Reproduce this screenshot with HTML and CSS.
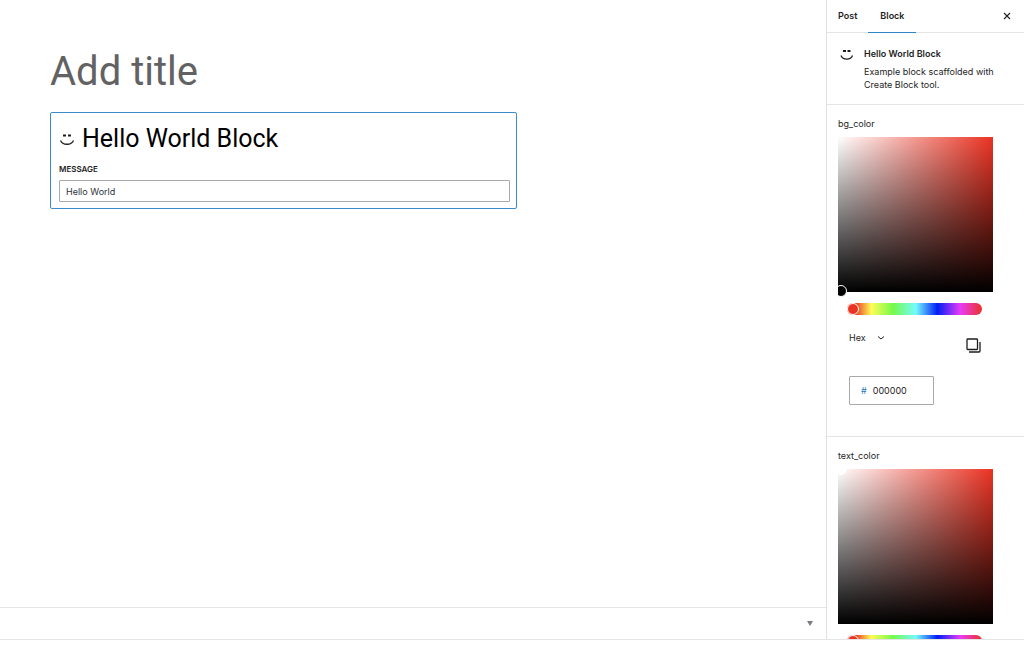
FILE: index.html
```html
<!DOCTYPE html>
<html lang="en">
<head>
<meta charset="utf-8">
<meta name="viewport" content="width=device-width, initial-scale=1">
<title>Edit Post</title>
<link rel="stylesheet" href="styles.css">
</head>
<body>
<div class="app">
  <main class="editor">
    <div class="canvas">
      <h1 class="post-title">Add title</h1>
      <section class="block">
        <h2 class="block-heading">
          <svg class="smiley" viewBox="0 0 16 16" aria-hidden="true"><path d="M4 4.500h3M9 4.500h3" stroke-width="1.800"/><path d="M1.500 9.500c2 5 11 5 13 0" stroke-width="1.300"/></svg>
          Hello World Block
        </h2>
        <label class="field-label" for="message">Message</label>
        <input class="field-input" id="message" type="text" value="Hello World">
      </section>
    </div>
    <div class="metaboxes">
      <button class="metabox-toggle" type="button" aria-label="Toggle panel"><svg viewBox="0 0 6 5" aria-hidden="true"><path d="M0 0h6L3 5z"/></svg></button>
    </div>
  </main>
  <aside class="sidebar">
    <header class="tabs">
      <button class="tab" type="button">Post</button>
      <button class="tab tab-active" type="button">Block</button>
      <button class="close" type="button" aria-label="Close settings"><svg viewBox="0 0 8 8" aria-hidden="true"><path d="M1 1l6 6M7 1L1 7"/></svg></button>
    </header>
    <section class="card">
      <svg class="smiley" viewBox="0 0 16 16" aria-hidden="true"><path d="M4 4h3M8.500 4h3" stroke-width="1.800"/><path d="M2 8.500c1.800 4.800 9.700 4.800 11.500 0" stroke-width="1.300"/></svg>
      <div>
        <h2 class="card-title">Hello World Block</h2>
        <p class="card-text">Example block scaffolded with Create Block tool.</p>
      </div>
    </section>
    <section class="panel">
      <h3 class="panel-title">bg_color</h3>
      <div class="picker">
        <div class="saturation"><span class="pointer pointer-black"></span></div>
        <div class="controls">
          <input class="hue" type="range" min="0" max="359" value="0" aria-label="Hue">
          <div class="format-row">
            <div class="format">
              <select class="format-select" aria-label="Color format"><option>Hex</option><option>RGB</option><option>HSL</option></select>
              <svg class="chevron" viewBox="0 0 8 6" aria-hidden="true"><path d="M1 1.500l3 2.500 3-2.500"/></svg>
            </div>
            <button class="copy" type="button" aria-label="Copy"><svg viewBox="0 0 15 15" aria-hidden="true"><rect x="1" y="1" width="10.500" height="10.500" rx="0.800"/><path d="M14 4v9a1 1 0 0 1-1 1H3"/></svg></button>
          </div>
          <label class="hex"><span class="hash">#</span><input class="hex-input" type="text" value="000000" aria-label="Hex color"></label>
        </div>
      </div>
    </section>
    <section class="panel">
      <h3 class="panel-title">text_color</h3>
      <div class="picker">
        <div class="saturation"><span class="pointer pointer-white"></span></div>
        <div class="controls">
          <input class="hue" type="range" min="0" max="359" value="0" aria-label="Hue">
        </div>
      </div>
    </section>
  </aside>
</div>
</body>
</html>
```
FILE: styles.css
```css
* { box-sizing: border-box; }
body {
  margin: 0;
  background: #fff;
  color: #1e1e1e;
  font: 9px/13px Inter, "Liberation Sans", sans-serif;
}
h1, h2, h3, p { margin: 0; }
button, input, select { font: inherit; color: inherit; }
button { margin: 0; padding: 0; border: 0; background: none; }
svg { display: block; fill: none; stroke: #1e1e1e; }

.app {
  display: grid;
  grid-template-columns: minmax(0, 1fr) 198px;
  height: calc(100vh - 9px);
  border-bottom: 1px solid #e4e4e4;
}
.editor { display: flex; flex-direction: column; min-height: 0; }
.canvas { flex: 1; padding: 46px 50px; overflow: hidden; }
.post-title {
  margin-bottom: 14px;
  color: #626262;
  font-family: Roboto, "Liberation Sans", sans-serif;
  font-size: 40px;
  font-weight: 400;
  line-height: 52px;
}
.block {
  max-width: 467px;
  padding: 10px 6px 6px 8px;
  border: 1px solid #3c8bcb;
  border-radius: 2px;
}
.block-heading {
  display: flex;
  align-items: center;
  gap: 7px;
  margin-bottom: 8px;
  color: #000;
  font-family: Roboto, "Liberation Sans", sans-serif;
  font-size: 25px;
  font-weight: 400;
  line-height: 32px;
}
.smiley { width: 16px; height: 16px; flex: none; }
.field-label {
  display: block;
  margin-bottom: 4px;
  font-size: 8px;
  font-weight: 600;
  text-transform: uppercase;
}
.field-input {
  display: block;
  width: 100%;
  height: 22px;
  padding: 0 6px;
  border: 1px solid #a9a9a9;
  border-radius: 1px;
  background: #fff;
  color: #2c3338;
}
.metaboxes {
  display: flex;
  align-items: center;
  justify-content: flex-end;
  height: 32px;
  padding-right: 13px;
  border-top: 1px solid #e4e4e4;
}
.metabox-toggle svg { width: 6px; height: 5px; fill: #787c82; stroke: none; }

.sidebar { overflow: hidden; border-left: 1px solid #e0e0e0; }
.tabs {
  display: flex;
  height: 33px;
  padding-bottom: 1px;
  border-bottom: 1px solid #e4e4e4;
}
.tab { padding: 0 11px; font-weight: 600; }
.tab-active { height: 33px; padding: 0 12px 2px; box-shadow: inset 0 -1px #2f86c5; }
.close { margin-left: auto; padding: 0 13px; }
.close svg { width: 8px; height: 8px; stroke-width: 1.100; }
.card {
  display: flex;
  gap: 9px;
  padding: 14px 11px 13px 12px;
  border-bottom: 1px solid #e4e4e4;
}
.card-title { margin-bottom: 5px; font-size: 9px; font-weight: 600; }
.panel {
  padding: 12px 11px 31px;
  border-bottom: 1px solid #e4e4e4;
}
.panel-title { margin-bottom: 7px; font-size: 9px; font-weight: 400; }
.picker { width: 155px; }
.saturation {
  position: relative;
  aspect-ratio: 1;
  background: linear-gradient(to top, #000, transparent), linear-gradient(to right, #fff, #eb3323);
  clip-path: inset(-6px -6px -6px 0);
}
.pointer {
  position: absolute;
  width: 12px;
  height: 12px;
  border: 1px solid #fff;
  border-radius: 50%;
}
.pointer-black { left: -3px; bottom: -5px; background: #000; }
.pointer-white { left: -3px; top: -6px; background: #fff; }
.controls { padding: 11px 11px 0; }
.hue {
  display: block;
  appearance: none;
  width: 135px;
  height: 12px;
  margin: 0 0 0 -2px;
  border-radius: 6px;
  background: linear-gradient(to right, #eb3323 8px, #fffd55 18%, #75f94c 34%, #73fbfd 51%, #001df5 67%, #e93cf7 84%, #ea3340 98%);
}
.hue::-webkit-slider-thumb {
  appearance: none;
  width: 12px;
  height: 12px;
  border: 1px solid #fff;
  border-radius: 50%;
  background: #eb3323;
}
.format-row {
  display: flex;
  justify-content: space-between;
  padding: 16px 1px 0 0;
}
.format { display: grid; grid-template-columns: 26px 10px; align-items: center; height: 13px; }
.format-select {
  grid-area: 1 / 1 / 2 / 3;
  width: 36px;
  height: 13px;
  padding: 0;
  border: 0;
  background: none;
  appearance: none;
}
.chevron { grid-area: 1 / 2; justify-self: end; width: 8px; height: 6px; pointer-events: none; }
.copy { padding-top: 7px; }
.copy svg { width: 15px; height: 15px; stroke-width: 1.300; }
.hex {
  display: flex;
  align-items: center;
  gap: 6px;
  width: 85px;
  height: 29px;
  margin-top: 23px;
  padding: 0 11px;
  border: 1px solid #a9a9a9;
  border-radius: 1px;
}
.hash { color: #2879b9; }
.hex-input {
  flex: 1;
  min-width: 0;
  padding: 0;
  border: 0;
  background: none;
}
```
